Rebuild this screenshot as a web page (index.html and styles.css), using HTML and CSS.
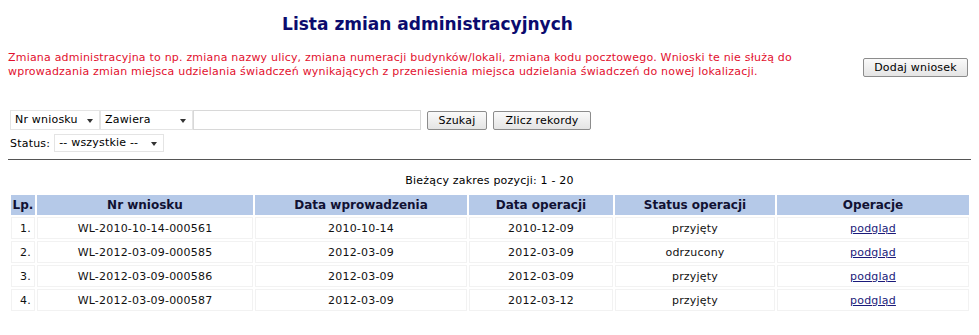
FILE: index.html
```html
<!DOCTYPE html>
<html lang="pl">
<head>
<meta charset="utf-8">
<title>Lista zmian administracyjnych</title>
<link rel="stylesheet" href="styles.css">
</head>
<body>
<h1 class="title">Lista zmian administracyjnych</h1>
<div class="intro">
  <p class="note">Zmiana administracyjna to np. zmiana nazwy ulicy, zmiana numeracji budynków/lokali, zmiana kodu pocztowego. Wnioski te nie służą do wprowadzania zmian miejsca udzielania świadczeń wynikających z przeniesienia miejsca udzielania świadczeń do nowej lokalizacji.</p>
  <button class="btn btn-add">Dodaj wniosek</button>
</div>
<div class="filters">
  <div class="filter-row">
    <div class="sel sel-field">Nr wniosku<span class="arrow"></span></div>
    <div class="sel sel-op">Zawiera<span class="arrow"></span></div>
    <div class="text-input"></div>
    <button class="btn btn-search">Szukaj</button>
    <button class="btn btn-count">Zlicz rekordy</button>
  </div>
  <div class="filter-row status-row">
    <span class="label">Status:</span>
    <div class="sel sel-status">-- wszystkie --<span class="arrow"></span></div>
  </div>
</div>
<hr class="rule">
<div class="range">Bieżący zakres pozycji: 1 - 20</div>
<table class="list">
  <thead>
    <tr><th class="c-lp">Lp.</th><th class="c-nr">Nr wniosku</th><th class="c-dw">Data wprowadzenia</th><th class="c-do">Data operacji</th><th class="c-st">Status operacji</th><th class="c-op">Operacje</th></tr>
  </thead>
  <tbody>
    <tr><td class="lp">1.</td><td>WL-2010-10-14-000561</td><td>2010-10-14</td><td>2010-12-09</td><td>przyjęty</td><td><a href="#">podgląd</a></td></tr>
    <tr><td class="lp">2.</td><td>WL-2012-03-09-000585</td><td>2012-03-09</td><td>2012-03-09</td><td>odrzucony</td><td><a href="#">podgląd</a></td></tr>
    <tr><td class="lp">3.</td><td>WL-2012-03-09-000586</td><td>2012-03-09</td><td>2012-03-09</td><td>przyjęty</td><td><a href="#">podgląd</a></td></tr>
    <tr><td class="lp">4.</td><td>WL-2012-03-09-000587</td><td>2012-03-09</td><td>2012-03-12</td><td>przyjęty</td><td><a href="#">podgląd</a></td></tr>
  </tbody>
</table>
</body>
</html>
```
FILE: styles.css
```css
html, body { margin: 0; padding: 0; background: #fff; }
body {
  font-family: "DejaVu Sans", Verdana, sans-serif;
  font-size: 11px;
  letter-spacing: 0.2px;
  color: #000;
  padding: 0 8px;
}
.title {
  margin: 14px 0 0;
  padding-right: 124px;
  text-align: center;
  font-size: 17px;
  font-weight: bold;
  letter-spacing: 0;
  color: #0b0b6e;
  line-height: 20px;
}
.intro {
  display: flex;
  align-items: center;
  justify-content: space-between;
  margin-top: 17px;
}
.note {
  margin: 0;
  color: #e2102e;
  line-height: 14px;
  width: 820px;
}
.btn {
  font-family: "DejaVu Sans", Verdana, sans-serif;
  font-size: 11px;
  letter-spacing: 0.2px;
  color: #000;
  background: linear-gradient(#fafafa, #e4e4e4);
  border: 1px solid #8c8c8c;
  border-radius: 2px;
  height: 19px;
  padding: 0 6px;
  line-height: 17px;
}
.btn-add { margin-right: 3px; width: 105px; margin-top: 4px; }
.filters { margin-top: 31px; }
.filter-row { display: flex; align-items: center; }
.sel {
  position: relative;
  border: 1px solid #e4e4e4;
  line-height: 18px;
  padding-left: 4px;
  box-sizing: border-box;
  height: 20px;
}
.arrow {
  position: absolute;
  right: 6px;
  top: 8px;
  width: 0; height: 0;
  border-left: 3px solid transparent;
  border-right: 3px solid transparent;
  border-top: 4px solid #333;
}
.sel-field { width: 90px; margin-left: 2px; }
.sel-op { width: 93px; }
.text-input {
  width: 228px;
  height: 20px;
  border: 1px solid #d8d8d8;
  box-sizing: border-box;
}
.btn-search { margin-left: 6px; width: 60px; }
.btn-count { margin-left: 6px; width: 98px; }
.status-row { margin-top: 4px; }
.label { margin-left: 2px; margin-right: 4px; }
.sel-status { width: 110px; height: 18px; line-height: 16px; }
.sel-status .arrow { top: 7px; }
.rule {
  margin: 7px 0 0;
  border: 0;
  border-top: 1px solid #555;
  height: 0;
  width: 963px;
}
.range { text-align: center; margin-top: 14px; line-height: 14px; }
.list {
  margin-top: 5px;
  margin-left: 1px;
  width: 962px;
  border-collapse: separate;
  border-spacing: 2px;
}
.list th, .list td {
  border: 1px solid #f2f2f2;
  text-align: center;
  font-size: 11px;
  padding: 0;
}
.list th {
  background: #b5c9e8;
  border-color: #b5c9e8;
  font-weight: bold;
  font-size: 12px;
  letter-spacing: 0;
  height: 18px;
  color: #111133;
}
.list td { height: 20px; color: #111; }
.list td.lp { text-align: right; padding-right: 3px; }
.c-lp { width: 22px; }
.c-nr { width: 214px; }
.c-dw { width: 210px; }
.c-do { width: 142px; }
.c-st { width: 158px; }
.list a { color: #1a1a7a; text-decoration: underline; }
```
